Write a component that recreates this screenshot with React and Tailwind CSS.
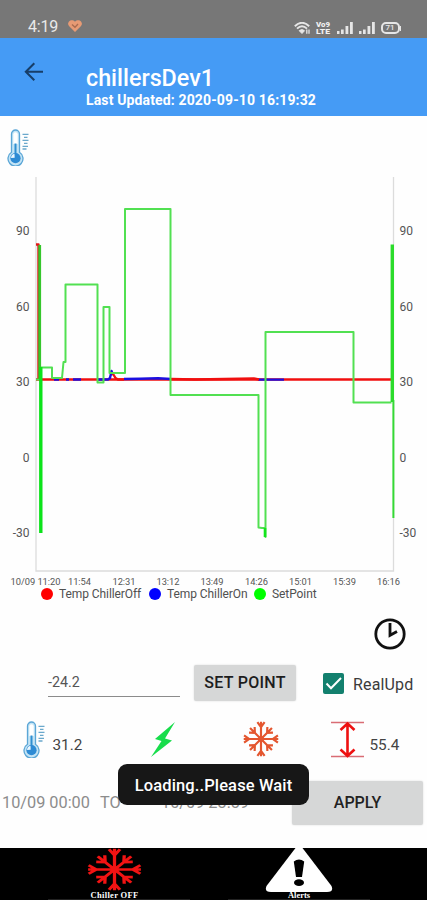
const yTicks = [
  { label: "90", y: 61 },
  { label: "60", y: 136.5 },
  { label: "30", y: 212 },
  { label: "0", y: 287.5 },
  { label: "-30", y: 363 },
];

const xTicks = [
  { label: "10/09 11:20", x: 35.5, width: 50 },
  { label: "11:54", x: 79.5, width: 23 },
  { label: "12:31", x: 124, width: 23 },
  { label: "13:12", x: 168, width: 23 },
  { label: "13:49", x: 212, width: 23 },
  { label: "14:26", x: 256.5, width: 23 },
  { label: "15:01", x: 300.5, width: 23 },
  { label: "15:39", x: 344.5, width: 23 },
  { label: "16:16", x: 388.5, width: 23 },
];

function Thermometer({ className }) {
  return (
    <svg className={className} viewBox="0 0 22 37" fill="none">
      <path
        d="M4.5 5a4 4 0 0 1 8 0v18.3a7.5 7.5 0 1 1-8 0z"
        fill="#c4e4f5"
        stroke="#5ba6d6"
        strokeWidth="1.3"
      />
      <path d="M6.3 5.5a2.2 2.2 0 0 1 4.4 0V15H6.3z" fill="#fff" />
      <path d="M8.5 14.5V26" stroke="#2f8fd0" strokeWidth="2" />
      <circle cx="8.5" cy="29.2" r="5.1" fill="#2e8bd4" />
      <path d="M4 29a4.5 4.5 0 0 1 3.5-4.2l.2 4z" fill="#eaf7ff" />
      <path
        d="M15.5 5.3h6M17 8.3h3.5M15.5 11.3h6M17 14.3h3.5M15.5 17.3h5.5M15.5 20h4"
        stroke="#6aa8cc"
        strokeWidth="1.3"
      />
    </svg>
  );
}

function Snowflake({ className }) {
  return (
    <svg
      className={className}
      viewBox="-50 -50 100 100"
      preserveAspectRatio="none"
      fill="none"
      stroke="currentColor"
      strokeWidth="6"
    >
      {[0, 90, 180, 270].map((angle) => (
        <g key={angle} transform={`rotate(${angle})`}>
          <path d="M0 0V-48M-10 -47L0 -33L10 -47" />
        </g>
      ))}
      {[45, 135, 225, 315].map((angle) => (
        <g key={angle} transform={`rotate(${angle})`}>
          <path d="M0 0V-43M-11 -36L0 -24L11 -36" />
        </g>
      ))}
      <circle r="8" fill="currentColor" stroke="none" />
    </svg>
  );
}

function SignalBars() {
  return (
    <svg className="h-3 w-4" viewBox="0 0 16 12" fill="#e6e6e6">
      <rect x="0" y="9" width="2.5" height="3" />
      <rect x="4" y="7.5" width="2.7" height="4.5" />
      <rect x="8.5" y="4" width="2.8" height="8" />
      <rect x="13" y="0" width="2.8" height="12" />
    </svg>
  );
}

function StatusBar() {
  return (
    <div className="flex h-[38px] items-start bg-[#777777] pt-[20px] pl-7 pr-[26px]">
      <span className="-mt-[4px] w-[40px] text-[16px] leading-[22px] tracking-[-0.2px] text-[#e9e9e9]">
        4:19
      </span>
      <svg className="h-[12px] w-[14px]" viewBox="0 0 14 12">
        <path
          d="M7 12L1.2 6.3A3.7 3.7 0 0 1 1 1.5C2.4-.2 5.3-.3 7 1.7 8.7-.3 11.6-.2 13 1.5a3.7 3.7 0 0 1-.2 4.8z"
          fill="#e79a74"
        />
        <path d="M4 4.5L7 7.3L10 4" fill="none" stroke="#a96b50" strokeWidth="1.3" />
      </svg>
      <div className="ml-auto flex items-center">
        <svg className="mr-[6px] h-3 w-4" viewBox="0 0 16 12" fill="none" stroke="#e6e6e6">
          <path d="M.8 4.2Q8-2.6 15.2 4.2M3 6.6Q8 2 13 6.6" strokeWidth="1.9" />
          <path d="M5.2 8.7Q8 6.4 10.5 8.7L8 11.5z" fill="#e6e6e6" />
          <path d="M12.8 7.5v4.3M15 7.5v4.3" strokeWidth="1.3" />
        </svg>
        <svg className="mr-[7px] h-4 w-[14px] overflow-visible" viewBox="0 0 14 16" fill="#f0f0f0" fontSize="6.5" fontWeight="900">
          <text x="0" y="7.2" textLength="14" lengthAdjust="spacingAndGlyphs">
            Vo9
          </text>
          <text x="0" y="13.8" textLength="14" lengthAdjust="spacingAndGlyphs">
            LTE
          </text>
        </svg>
        <div className="mr-[6px]">
          <SignalBars />
        </div>
        <div className="mr-[6px]">
          <SignalBars />
        </div>
        <div className="flex h-3 w-[19px] items-center justify-center rounded-[5px] border-2 border-[#e6e6e6] text-[8px] font-medium text-[#e6e6e6]">
          71
        </div>
        <div className="h-[5px] w-[1.5px] bg-[#e6e6e6]" />
      </div>
    </div>
  );
}

function Header() {
  return (
    <header className="flex h-[78px] bg-[#459bf5]">
      <svg
        className="mt-[24px] ml-[24px] h-5 w-5"
        viewBox="0 0 20 20"
        fill="none"
        stroke="#173e68"
        strokeWidth="2"
      >
        <path d="M19 9.7H2M10.3 1.2L1.8 9.7L10.3 18.2" />
      </svg>
      <div className="ml-[42px] pt-[27px] text-white">
        <h1 className="text-[23.3px] leading-[26px] font-medium">chillersDev1</h1>
        <p className="text-[14px] leading-[18px] font-bold tracking-[0.14px]">
          Last Updated: 2020-09-10 16:19:32
        </p>
      </div>
    </header>
  );
}

function Chart() {
  return (
    <svg className="block h-[417px] w-full" viewBox="0 0 427 417" fill="none">
      <path d="M36 7V401H393.5V7" stroke="#dcdcdc" strokeWidth="1.3" />

      <g fontSize="12" fill="#555">
        {yTicks.map((t) => (
          <g key={t.label}>
            <text x="29.5" y={t.y + 4.3} textAnchor="end">
              {t.label}
            </text>
            <text x="399.5" y={t.y + 4.3}>
              {t.label}
            </text>
          </g>
        ))}
      </g>
      <g fontSize="9.3" fill="#555" textAnchor="middle">
        {xTicks.map((t) => (
          <text key={t.label} x={t.x} y="414.5" textLength={t.width}>
            {t.label}
          </text>
        ))}
      </g>

      <g strokeWidth="2.4" strokeLinejoin="round">
        <path d="M36 209.5H393" stroke="#f00f0f" />
        <path
          d="M54 209.5H59M66 209.5H69M73 209.5H81M98 209.5H108L110 208L111.5 201L113 205M124 209L140 208.8L158 208.3L171 209M258 209.6H284"
          stroke="#1b0fe0"
        />
        <path d="M112.5 203L115.5 208L118 209.5H124M171 209L195 209.5L254 208.5L259 209.5" stroke="#f00f0f" />
        <path d="M36 74.5H38.5V209" stroke="#e01818" />
      </g>

      <g stroke="#52e052" strokeWidth="2" strokeLinejoin="round">
        <path d="M36 209.5H41V197.5H52V208H62L63.5 192H65.5V114.5H97.5V212.5H103.5V137H109.5V203H125V39H170.5V225H258.5V357.5L262 358H265.5V367V162H353.5V232.5H391.5" />
        <path d="M265 358V367" strokeWidth="2.6" stroke="#12e51c" />
      </g>
      <path d="M39.7 75V209" stroke="#35c62c" strokeWidth="2.8" />
      <path d="M40.8 197V363" stroke="#0be31a" strokeWidth="3.4" />
      <path d="M392.3 74.5V232" stroke="#2bdc2b" strokeWidth="3.4" />
      <path d="M393.4 230V348" stroke="#35d935" strokeWidth="2" />
    </svg>
  );
}

function Legend() {
  return (
    <div className="flex h-[14px] items-center pl-[41px] text-[12px] leading-[14px] tracking-[-0.08px] text-[#505050]">
      <span className="mr-[6px] h-3 w-3 rounded-full bg-[#ff0000]" />
      <span className="w-[90px]">Temp ChillerOff</span>
      <span className="mr-[6px] h-3 w-3 rounded-full bg-[#0000ff]" />
      <span className="w-[87px]">Temp ChillerOn</span>
      <span className="mr-[6px] h-3 w-3 rounded-full bg-[#00ff00]" />
      <span>SetPoint</span>
    </div>
  );
}

function SetPointRow() {
  return (
    <div className="flex h-[36px] items-start">
      <div className="ml-[48px] flex h-[31.5px] w-[132px] items-center border-b-[1.5px] border-[#8b8b8b] pt-[5px] text-[14.3px] text-[#555]">
        -24.2
      </div>
      <button
        type="button"
        className="ml-[14px] h-[36px] w-[102px] rounded-[2px] bg-[#d6d7d7] text-[16px] font-medium tracking-[0.3px] whitespace-nowrap text-[#1d1d1d] shadow-[0_0_2px_rgba(0,0,0,0.15)]"
      >
        SET POINT
      </button>
      <div className="mt-[8px] ml-[27px] h-[21px] w-[21px] rounded-[2px] bg-[#13806e]">
        <svg viewBox="0 0 21 21" fill="none" stroke="#fff" strokeWidth="2">
          <path d="M3.5 10.5L8 15.2L18 5" />
        </svg>
      </div>
      <span className="mt-[9px] ml-[9px] text-[16px] leading-[22px] tracking-[0.15px] text-[#3b3b3b]">
        RealUpd
      </span>
    </div>
  );
}

function Readings() {
  return (
    <div className="flex h-[38px] items-start pl-[23px]">
      <Thermometer className="h-[37px] w-[22px]" />
      <span className="mt-[14px] ml-[7.5px] w-[98.5px] text-[15.3px] leading-[20px] text-[#444]">
        31.2
      </span>
      <svg className="mt-[1px] h-[35px] w-[24px]" viewBox="0 0 24 35">
        <path d="M24 0L4 17L10.5 19L0 35L21 18.5L14 16.5z" fill="#18dd4c" />
      </svg>
      <Snowflake className="ml-[68px] h-[36px] w-[36px] text-[#e4562f]" />
      <svg className="ml-[52px] h-[37px] w-[33px]" viewBox="0 0 33 37" fill="none">
        <path d="M0 1.5H33M0 35.5H33" stroke="#d96c74" strokeWidth="1.5" />
        <path d="M16.5 3V34M9.5 9L16.5 2.5L23.5 9M9.5 28.5L16.5 35L23.5 28.5" stroke="#ee1010" strokeWidth="2.6" />
      </svg>
      <span className="mt-[14px] ml-[5.5px] text-[15.3px] leading-[20px] text-[#444]">55.4</span>
    </div>
  );
}

function Toast() {
  return (
    <div className="absolute top-[764px] left-[118px] flex h-[41px] w-[191px] items-center justify-center rounded-[9px] bg-[#171717] pt-[3px] text-[16.5px] font-medium tracking-[0.12px] whitespace-nowrap text-white">
      Loading..Please Wait
    </div>
  );
}

function BottomNav() {
  return (
    <nav className="flex h-[52px] bg-black font-['Liberation_Serif',serif] text-white">
      <div className="flex w-[213px] flex-col items-center pl-[16px]">
        <Snowflake className="h-[43px] w-[55px] text-[#f21313]" />
        <span className="text-[8.5px] leading-[8px] font-bold tracking-[0.3px]">Chiller OFF</span>
        <span className="ml-[8px] h-px w-[142px] bg-[#222]" />
      </div>
      <div className="flex w-[172px] flex-col items-center">
        <svg className="-mt-[2px] h-[46px] w-[68px] shrink-0" viewBox="0 0 68 46">
          <path
            d="M30.5 2Q34-1 37.5 2L66.5 40Q69 46 62 46H6Q-1 46 1.5 40z"
            fill="#fff"
          />
          <path d="M28.8 15.5Q34 11.5 39.2 15.5L37 31H31z" fill="#000" />
          <ellipse cx="34" cy="36.7" rx="5" ry="3.4" fill="#000" />
        </svg>
        <span className="text-[8.5px] leading-[7px] font-bold">Alerts</span>
        <span className="h-px w-[142px] bg-[#222]" />
      </div>
    </nav>
  );
}

export default function App() {
  return (
    <div className="relative h-[900px] w-[427px] overflow-hidden bg-[#fefefe] font-['Roboto',sans-serif]">
      <StatusBar />
      <Header />
      <div className="h-[54px] pt-[13px] pl-[7px]">
        <Thermometer className="h-[37px] w-[22px]" />
      </div>
      <Chart />
      <Legend />
      <div className="flex h-[64px] justify-end pt-[16px] pr-[20px]">
        <svg className="h-[34px] w-[34px]" viewBox="0 0 34 34" fill="none" stroke="#111">
          <circle cx="17" cy="17" r="14.2" strokeWidth="2.8" />
          <path d="M17 6V18.3L24 14.5" strokeWidth="2.8" />
        </svg>
      </div>
      <SetPointRow />
      <div className="h-[20px]" />
      <Readings />
      <div className="flex h-[89px] items-start pt-[22px] text-[16.3px] text-[#8c8c8c]">
        <span className="mt-[10px] ml-[2px] w-[98px] whitespace-nowrap">10/09 00:00</span>
        <span className="mt-[10px] w-[61px]">TO</span>
        <span className="mt-[10px] w-[131px] whitespace-nowrap">10/09 23:59</span>
        <button
          type="button"
          className="h-[44px] w-[131px] rounded-[2px] bg-[#d6d7d7] text-[16px] font-medium text-[#222] shadow-[0_0_2px_rgba(0,0,0,0.15)]"
        >
          APPLY
        </button>
      </div>
      <BottomNav />
      <Toast />
    </div>
  );
}
